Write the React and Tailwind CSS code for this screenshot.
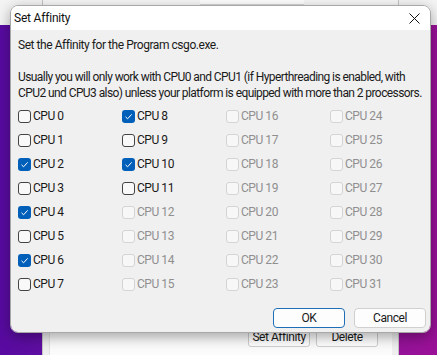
import React from "react";

const FONT = { fontFamily: '"Segoe UI", Roboto, "Noto Sans", sans-serif' };

const CHECKED = [2, 4, 6, 8, 10];

const CheckBox = ({ checked, disabled }) => {
  if (checked) {
    return (
      <span className="w-[13px] h-[13px] rounded-[3px] bg-[#005fb8] flex items-center justify-center shrink-0">
        <svg width="9" height="9" viewBox="0 0 9 9">
          <path d="M1.5 4.8 L3.6 6.8 L7.6 2.4" fill="none" stroke="#fff" strokeWidth="1" />
        </svg>
      </span>
    );
  }
  return (
    <span
      className={`w-[13px] h-[13px] rounded-[3px] border shrink-0 ${
        disabled ? "border-[#d4d4d4] bg-[#f7f7f7]" : "border-[#444] bg-[#f9f9f9]"
      }`}
    />
  );
};

const CpuItem = ({ n }) => {
  const disabled = n >= 12;
  return (
    <div className="h-[24px] flex items-center gap-[2px]">
      <CheckBox checked={CHECKED.includes(n)} disabled={disabled} />
      <span className={disabled ? "text-[#8f8f8f]" : "text-[#1a1a1a]"}>CPU {n}</span>
    </div>
  );
};

export default function App() {
  const cpus = Array.from({ length: 32 }, (_, i) => i);

  return (
    <div
      className="relative w-[437px] h-[355px] overflow-hidden bg-linear-to-r from-[#580aa1] to-[#9a1097] text-[12px] tracking-[-0.45px]"
      style={FONT}
    >
      {/* strip of another window at the top */}
      <div className="absolute left-0 right-0 top-0 h-[25px] bg-[#f4f4f4]" />

      {/* window behind the dialog */}
      <div className="absolute left-[42px] top-0 w-[357px] h-[355px] bg-[#efefef] border-x border-[#c4c4c4] flex flex-col">
        <div className="h-[5px] flex">
          <div className="w-[157px] bg-[#f7f7f7]" />
          <div className="w-[104px] bg-white border-b border-[#d8d8d8]" />
          <div className="flex-1 bg-[#f7f7f7]" />
        </div>
        <div className="flex-1" />
        <div className="mx-[6px] h-[55px] bg-[#fbfbfb] border-l border-[#e2e2e2] flex justify-end gap-[6px] pr-[14px] pt-[26px]">
          <div className="w-[62px] h-[21px] border border-[#cfcfcf] rounded-[3px] bg-white flex items-center justify-center whitespace-nowrap text-[#1a1a1a]">
            Set Affinity
          </div>
          <div className="w-[62px] h-[21px] border border-[#cfcfcf] rounded-[3px] bg-white flex items-center justify-center whitespace-nowrap text-[#1a1a1a]">
            Delete
          </div>
        </div>
      </div>

      {/* dialog */}
      <div className="absolute left-[10px] top-[5px] w-[421px] h-[328px] rounded-[8px] overflow-hidden border border-[#a8a8a8] shadow-[0_4px_14px_rgba(0,0,0,0.35)] flex flex-col">
        <div className="h-[24px] bg-white flex items-center justify-between pl-[3px] pr-[10px] text-[#111] tracking-[-0.2px]">
          <span>Set Affinity</span>
          <svg width="11" height="11" viewBox="0 0 11 11">
            <path d="M0.5 0.5 L10.5 10.5 M10.5 0.5 L0.5 10.5" stroke="#111" strokeWidth="1" />
          </svg>
        </div>
        <div className="flex-1 bg-[#f0f0f0] pl-[7px] pt-[7px] flex flex-col text-[#1a1a1a]">
          <div className="leading-[16px] whitespace-nowrap">
            <p>Set the Affinity for the Program csgo.exe.</p>
            <p className="h-[16px]" />
            <div className="tracking-[-0.58px]">
              <p>Usually you will only work with CPU0 and CPU1 (if Hyperthreading is enabled, with</p>
              <p>CPU2 und CPU3 also) unless your platform is equipped with more than 2 processors.</p>
            </div>
          </div>
          <div className="mt-[3px] grid grid-flow-col grid-rows-8 grid-cols-[104px_104px_104px_104px]">
            {cpus.map((n) => (
              <CpuItem key={n} n={n} />
            ))}
          </div>
          <div className="mt-[12px] flex justify-end gap-[9px] pr-[4px]">
            <div className="w-[72px] h-[20px] rounded-[4px] border border-[#1f6fb8] bg-[#fdfdfd] flex items-center justify-center">
              OK
            </div>
            <div className="w-[72px] h-[20px] rounded-[4px] border border-[#d0d0d0] bg-[#fdfdfd] flex items-center justify-center">
              Cancel
            </div>
          </div>
        </div>
      </div>
    </div>
  );
}
